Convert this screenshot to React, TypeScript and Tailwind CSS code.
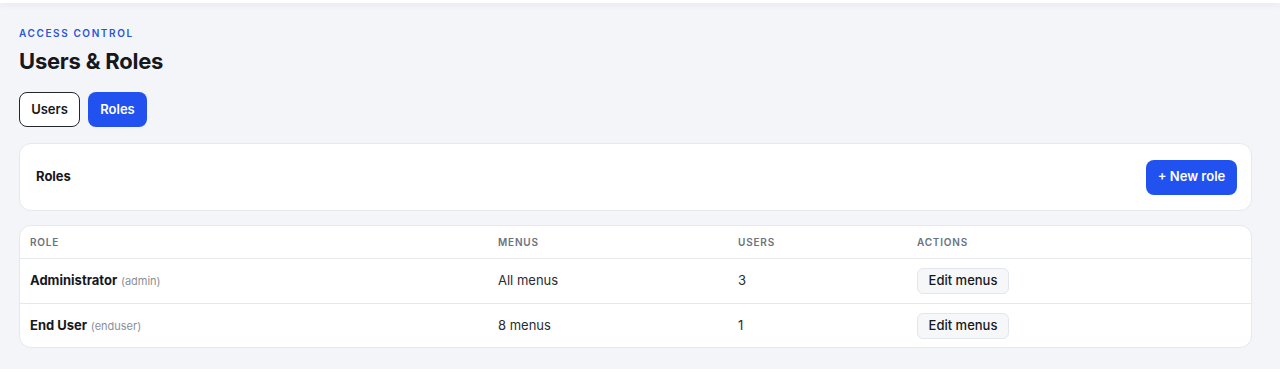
const roles = [
  { name: 'Administrator', key: 'admin', menus: 'All menus', users: 3 },
  { name: 'End User', key: 'enduser', menus: '8 menus', users: 1 },
];

export default function App() {
  return (
    <div className="min-h-[369px] bg-[#f4f5f9] font-['Inter',sans-serif] text-[#16181d]">
      <div className="h-[3px] bg-white shadow-[0_2px_6px_rgba(15,23,42,0.08)]" />
      <div className="pl-[19px] pr-[28px] pt-[22px]">
        <div className="text-[10px] font-semibold uppercase tracking-[0.16em] text-[#2a55d9] leading-[16px]">
          Access control
        </div>
        <h1 className="mt-[4px] text-[22px] font-bold leading-[32px] tracking-[-0.01em]">Users &amp; Roles</h1>

        <div className="mt-[15px] flex gap-[8px]">
          <button className="h-[35px] w-[61px] rounded-lg border border-[#23262d] bg-white text-[13px] font-semibold">
            Users
          </button>
          <button className="h-[35px] w-[59px] rounded-lg bg-[#2152f0] text-[13px] font-semibold text-white">
            Roles
          </button>
        </div>

        <div className="mt-[16px] flex h-[68px] items-center justify-between rounded-xl border border-[#e6e8ee] bg-white pl-[16px] pr-[14px]">
          <h2 className="text-[13px] font-bold">Roles</h2>
          <button className="h-[35px] w-[91px] rounded-lg bg-[#2152f0] text-[13px] font-semibold text-white">
            + New role
          </button>
        </div>

        <div className="mt-[14px] overflow-hidden rounded-xl border border-[#e6e8ee] bg-white">
          <div className="grid h-[33px] grid-cols-[467px_240px_179px_1fr] items-center border-b border-[#e6e8ee] text-[10px] font-semibold uppercase tracking-[0.08em] text-[#6b7280]">
            <div className="pl-[10px]">Role</div>
            <div className="pl-[11px]">Menus</div>
            <div className="pl-[11px]">Users</div>
            <div className="pl-[11px]">Actions</div>
          </div>
          {roles.map((r, i) => (
            <div
              key={r.key}
              className={`grid h-[44px] grid-cols-[467px_240px_179px_1fr] items-center text-[13px] ${i > 0 ? 'border-t border-[#e6e8ee]' : ''}`}
            >
              <div className="pl-[10px]">
                <span className="font-bold">{r.name}</span>{' '}
                <span className="text-[11px] text-[#8a8f98]">({r.key})</span>
              </div>
              <div className="pl-[11px] text-[#2a2d33]">{r.menus}</div>
              <div className="pl-[11px] text-[#2a2d33]">{r.users}</div>
              <div className="pl-[11px]">
                <button className="h-[26px] w-[92px] rounded-md border border-[#e3e6ec] bg-[#f6f7f9] text-[13px] font-medium">
                  Edit menus
                </button>
              </div>
            </div>
          ))}
        </div>
      </div>
    </div>
  );
}
